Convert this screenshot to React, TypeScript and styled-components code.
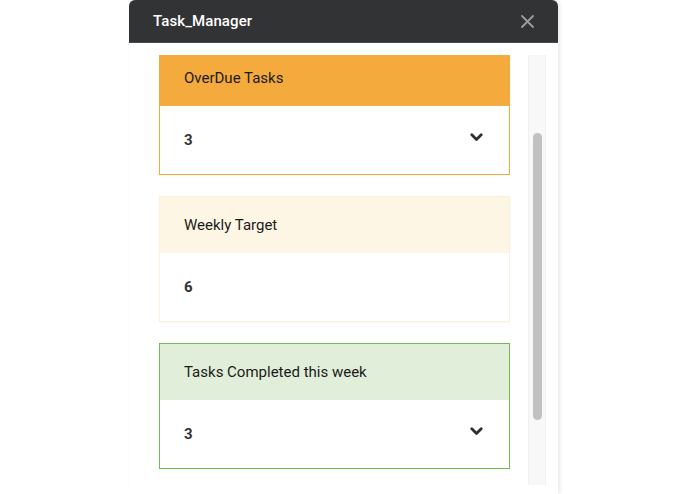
import React from "react";
import styled, { createGlobalStyle } from "styled-components";

const Global = createGlobalStyle`
  html, body { margin: 0; padding: 0; background: #ffffff; }
  body { font-family: Roboto, "Liberation Sans", Arial, sans-serif; overflow: hidden; }
  * { box-sizing: border-box; }
`;

const Page = styled.div`
  width: 695px;
  height: 494px;
  display: flex;
  padding-left: 129px;
`;

const Panel = styled.div`
  width: 429px;
  height: 494px;
  display: flex;
  flex-direction: column;
  background: #ffffff;
  border-radius: 6px 6px 0 0;
  box-shadow: 2px 0 4px rgba(0, 0, 0, 0.09);
`;

const Header = styled.div`
  height: 43px;
  flex: none;
  display: flex;
  align-items: center;
  justify-content: space-between;
  padding: 0 24px;
  background: #323335;
  border-radius: 6px 6px 0 0;
  border-bottom: 1px solid #4a4b4d;
`;

const Title = styled.div`
  color: #ffffff;
  font-size: 15px;
  font-weight: 500;
  letter-spacing: 0.1px;
`;

const Close = styled.button`
  width: 14px;
  height: 14px;
  padding: 0;
  border: none;
  background: transparent;
  display: flex;
  align-items: center;
  justify-content: center;
`;

const Body = styled.div`
  flex: 1;
  min-height: 0;
  display: flex;
  padding: 12px 12px 9px 0;
`;

const Viewport = styled.div`
  flex: 1;
  overflow: hidden;
  padding: 0 18px 0 30px;
`;

const List = styled.div`
  display: flex;
  flex-direction: column;
  gap: 21px;
  margin-top: -6px;
`;

type Tone = "overdue" | "target" | "done";

const tones: Record<Tone, { border: string; head: string }> = {
  overdue: { border: "#f4aa3c", head: "#f4aa3c" },
  target: { border: "#fbefdd", head: "#fdf6e4" },
  done: { border: "#74ba52", head: "#e1eed9" },
};

const Card = styled.div<{ $tone: Tone }>`
  border: 1px solid ${(p) => tones[p.$tone].border};
  background: #ffffff;
  box-shadow: 0 1px 2px rgba(0, 0, 0, 0.035);
`;

const CardHead = styled.div<{ $tone: Tone }>`
  height: 56px;
  display: flex;
  align-items: center;
  padding: 0 24px;
  background: ${(p) => tones[p.$tone].head};
  color: #1b1b1b;
  font-size: 15px;
`;

const CardBody = styled.div`
  height: 68px;
  display: flex;
  align-items: center;
  justify-content: space-between;
  padding: 0 26px 0 24px;
  color: #333333;
  font-size: 15px;
  font-weight: 700;
`;

const Chevron = styled.svg`
  display: block;
  margin-top: -5px;
`;

const Track = styled.div`
  width: 18px;
  flex: none;
  background: #f8f8f8;
  border-left: 1px solid #f0f0f0;
  border-right: 1px solid #f0f0f0;
  display: flex;
  justify-content: center;
  padding-top: 78px;
`;

const Thumb = styled.div`
  width: 9px;
  height: 287px;
  border-radius: 5px;
  background: #c1c1c1;
`;

const cards: { tone: Tone; title: string; value: string; chevron: boolean }[] = [
  { tone: "overdue", title: "OverDue Tasks", value: "3", chevron: true },
  { tone: "target", title: "Weekly Target", value: "6", chevron: false },
  { tone: "done", title: "Tasks Completed this week", value: "3", chevron: true },
];

export default function App() {
  return (
    <>
      <Global />
      <Page>
        <Panel>
          <Header>
            <Title>Task_Manager</Title>
            <Close aria-label="close">
              <svg width="13" height="13" viewBox="0 0 13 13">
                <path d="M1 1L12 12M12 1L1 12" stroke="#9d9d9d" strokeWidth="1.8" strokeLinecap="round" />
              </svg>
            </Close>
          </Header>
          <Body>
            <Viewport>
              <List>
                {cards.map((c) => (
                  <Card key={c.title} $tone={c.tone}>
                    <CardHead $tone={c.tone}>{c.title}</CardHead>
                    <CardBody>
                      <span>{c.value}</span>
                      {c.chevron && (
                        <Chevron width="13" height="9" viewBox="0 0 13 9">
                          <path
                            d="M1.8 1.8L6.5 6.5L11.2 1.8"
                            fill="none"
                            stroke="#2e2e2e"
                            strokeWidth="2.8"
                            strokeLinecap="round"
                            strokeLinejoin="round"
                          />
                        </Chevron>
                      )}
                    </CardBody>
                  </Card>
                ))}
              </List>
            </Viewport>
            <Track>
              <Thumb />
            </Track>
          </Body>
        </Panel>
      </Page>
    </>
  );
}
